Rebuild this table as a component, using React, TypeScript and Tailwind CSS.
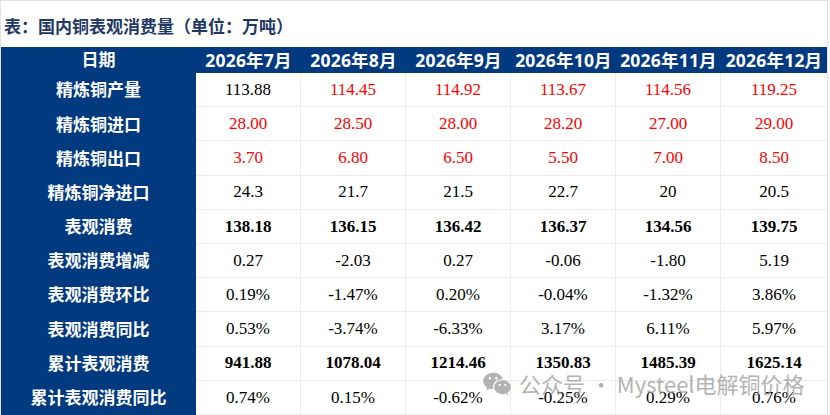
import { RiWechatFill } from 'react-icons/ri';

type Cell = { v: string; red?: boolean };

interface Row {
  label: string;
  bold?: boolean;
  cells: Cell[];
}

const months = ['2026年7月', '2026年8月', '2026年9月', '2026年10月', '2026年11月', '2026年12月'];

const r = (v: string): Cell => ({ v, red: true });
const k = (v: string): Cell => ({ v });

const rows: Row[] = [
  { label: '精炼铜产量', cells: [k('113.88'), r('114.45'), r('114.92'), r('113.67'), r('114.56'), r('119.25')] },
  { label: '精炼铜进口', cells: [r('28.00'), r('28.50'), r('28.00'), r('28.20'), r('27.00'), r('29.00')] },
  { label: '精炼铜出口', cells: [r('3.70'), r('6.80'), r('6.50'), r('5.50'), r('7.00'), r('8.50')] },
  { label: '精炼铜净进口', cells: ['24.3', '21.7', '21.5', '22.7', '20', '20.5'].map(k) },
  { label: '表观消费', bold: true, cells: ['138.18', '136.15', '136.42', '136.37', '134.56', '139.75'].map(k) },
  { label: '表观消费增减', cells: ['0.27', '-2.03', '0.27', '-0.06', '-1.80', '5.19'].map(k) },
  { label: '表观消费环比', cells: ['0.19%', '-1.47%', '0.20%', '-0.04%', '-1.32%', '3.86%'].map(k) },
  { label: '表观消费同比', cells: ['0.53%', '-3.74%', '-6.33%', '3.17%', '6.11%', '5.97%'].map(k) },
  { label: '累计表观消费', bold: true, cells: ['941.88', '1078.04', '1214.46', '1350.83', '1485.39', '1625.14'].map(k) },
  { label: '累计表观消费同比', cells: ['0.74%', '0.15%', '-0.62%', '-0.25%', '0.29%', '0.76%'].map(k) },
];

const sans = "font-['Noto_Sans','Noto_Sans_CJK_SC',sans-serif]";

export default function App() {
  return (
    <div className="relative w-[830px] h-[415px] overflow-hidden bg-white">
      <div className="w-[828px] border-x border-t border-[#e2e2e2]">
        {/* Title */}
        <div
          className={`h-[46px] flex items-center pl-[3px] pt-[6px] text-[17px] font-bold text-[#1f3864] ${sans}`}
        >
          表：国内铜表观消费量（单位：万吨）
        </div>

        {/* Table */}
        <div className="grid grid-cols-[195px_repeat(5,105px)_106px]">
          <div className={`h-[26px] bg-[#023a80] text-white font-bold text-[17px] flex items-center justify-center ${sans}`}>
            日期
          </div>
          {months.map((m) => (
            <div
              key={m}
              className={`h-[26px] bg-[#023a80] text-white font-bold text-[17.5px] flex items-center justify-center tracking-[0.2px] ${sans}`}
            >
              {m}
            </div>
          ))}

          {rows.map((row) => (
            <div key={row.label} className="contents">
              <div
                className={`h-[34.2px] bg-[#023a80] text-white font-bold text-[17px] flex items-center justify-center ${sans}`}
              >
                {row.label}
              </div>
              {row.cells.map((c, i) => (
                <div
                  key={i}
                  className={`h-[34.2px] flex items-center justify-center border-b border-[#ececec] text-[17px] font-['Liberation_Serif',serif] ${
                    i < 5 ? 'border-r' : ''
                  } ${c.red ? 'text-[#ff0000]' : 'text-black'} ${row.bold ? 'font-bold' : ''}`}
                >
                  {c.v}
                </div>
              ))}
            </div>
          ))}
        </div>
      </div>

      {/* Watermark */}
      <div className="absolute left-[482px] top-[367px] flex items-center gap-[7px] text-[#9a9a9a] opacity-75 pointer-events-none">
        <RiWechatFill className="w-[30px] h-[30px]" />
        <span className="text-[22px] font-['Noto_Sans_CJK_SC',sans-serif]">
          公众号 · Mysteel电解铜价格
        </span>
      </div>
    </div>
  );
}
